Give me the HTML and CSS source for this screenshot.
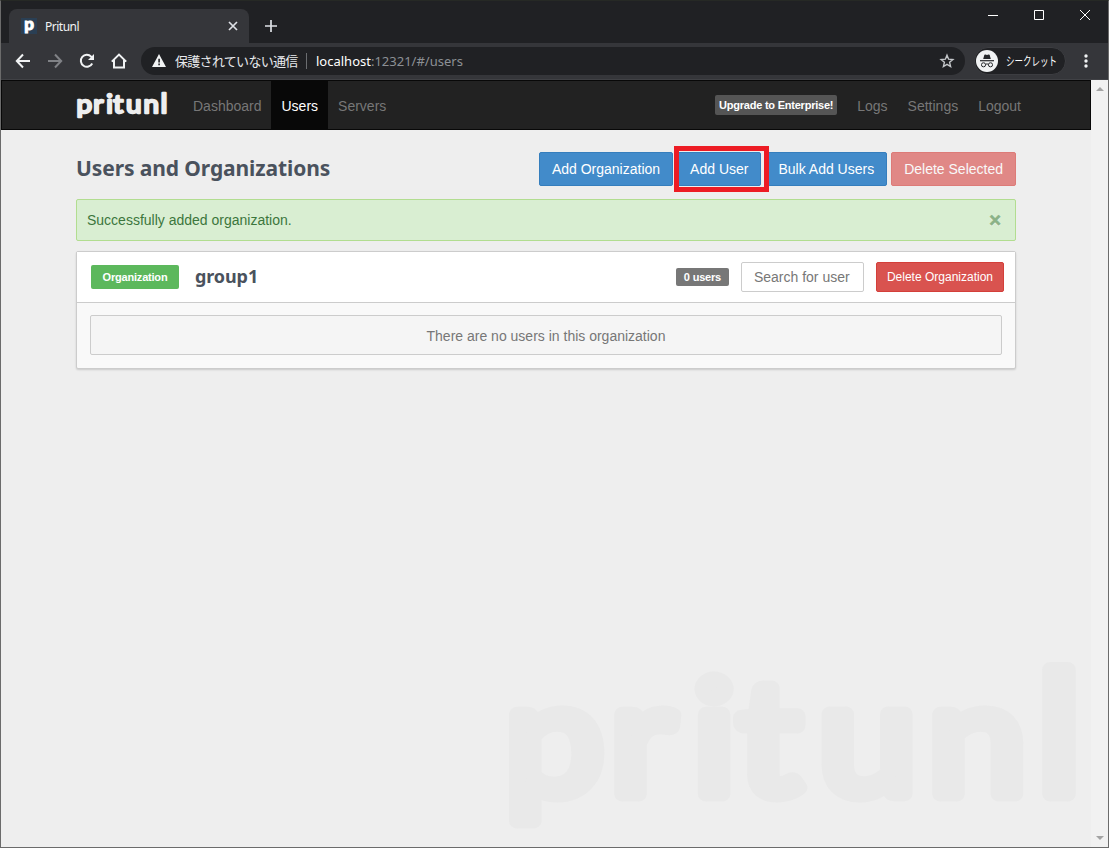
FILE: index.html
```html
<!DOCTYPE html>
<html lang="ja">
<head>
    <meta charset="utf-8">
    <title>Pritunl</title>
    <link rel="stylesheet" href="styles.css">
</head>
<body>
<div class="window">
    <!-- Tab strip -->
    <div class="tabstrip">
        <div class="tab">
            <span class="favicon">p</span>
            <span class="tab-title">Pritunl</span>
            <svg class="tab-close" width="10" height="10" viewBox="0 0 10 10"><path d="M1 1l8 8M9 1l-8 8"/></svg>
        </div>
        <svg class="new-tab" width="12" height="12" viewBox="0 0 12 12"><path d="M6 0v12M0 6h12"/></svg>
        <div class="window-controls">
            <svg width="12" height="12" viewBox="0 0 12 12"><path d="M1 6.5h10"/></svg>
            <svg width="12" height="12" viewBox="0 0 12 12"><path d="M1.5 1.5h9v9h-9z"/></svg>
            <svg width="12" height="12" viewBox="0 0 12 12"><path d="M1 1l10 10M11 1L1 11"/></svg>
        </div>
    </div>

    <!-- Address bar -->
    <div class="toolbar">
        <svg class="tool" width="16" height="16" viewBox="0 0 16 16"><path d="M15 8H2M8 1.5L1.8 8L8 14.5"/></svg>
        <svg class="tool disabled" width="16" height="16" viewBox="0 0 16 16"><path d="M1 8h13M8 1.5L14.2 8L8 14.5"/></svg>
        <svg class="tool" width="16" height="16" viewBox="0 0 16 16"><path d="M13.2 10.5a6 6 0 1 1-1-6.9L14 5.4"/><path class="solid" d="M15 1v6H9z"/></svg>
        <svg class="tool" width="16" height="16" viewBox="0 0 16 16"><path d="M.8 8.6L8 1.6l7.2 7M3 7v7.6h10V7"/></svg>
        <div class="omnibox">
            <svg class="warning" width="14" height="13" viewBox="0 0 14 13"><path d="M7 0l7 13H0z"/><path class="mark" d="M6.3 4.8h1.6v3.6H6.3zM6.3 9.6h1.6v1.6H6.3z"/></svg>
            <span class="insecure">保護されていない通信</span>
            <span class="divider"></span>
            <span class="url"><b>localhost</b>:12321/#/users</span>
            <svg class="star" width="16" height="16" viewBox="0 0 16 16"><path d="M8 2.2l1.6 4 4.3.3-3.3 2.8 1 4.2L8 11.3l-3.6 2.2 1-4.2-3.3-2.8 4.3-.3z"/></svg>
        </div>
        <div class="incognito">
            <svg width="22" height="22" viewBox="0 0 22 22">
                <circle cx="11" cy="11" r="11" fill="#f1f3f4"/>
                <path d="M7.2 9L8.3 5q.3-.8 1.1-.5l1.6.5 1.6-.5q.8-.3 1.1.5L14.8 9z" fill="#26282b"/>
                <path d="M4 10.7h14" stroke="#26282b" stroke-width="1.2"/>
                <g fill="none" stroke="#26282b"><rect x="5.5" y="12.8" width="4" height="4" rx="1.8"/><rect x="12.5" y="12.8" width="4" height="4" rx="1.8"/><path d="M9.5 14.3q1.5-.8 3 0"/></g>
            </svg>
            <span>シークレット</span>
        </div>
        <svg class="menu" width="4" height="14" viewBox="0 0 4 14"><circle cx="2" cy="2" r="1.7"/><circle cx="2" cy="7" r="1.7"/><circle cx="2" cy="12" r="1.7"/></svg>
    </div>

    <div class="viewport">
        <div class="page">
            <nav class="navbar">
                <svg class="logo" width="92" height="29" viewBox="507 663 582 182" preserveAspectRatio="none">
                    <text class="wordmark" transform="translate(505 0) scale(1.12 1)" y="795" x="-1 93 167 207 279 377 474">pritun<tspan class="tall">l</tspan></text>
                </svg>
                <a>Dashboard</a>
                <a class="active">Users</a>
                <a>Servers</a>
                <span class="upgrade">Upgrade to Enterprise!</span>
                <a>Logs</a>
                <a>Settings</a>
                <a>Logout</a>
            </nav>

            <main class="container">
                <div class="page-header">
                    <h3>Users and Organizations</h3>
                    <div class="actions">
                        <button class="btn btn-primary">Add Organization</button>
                        <span class="highlight"><button class="btn btn-primary">Add User</button></span>
                        <button class="btn btn-primary">Bulk Add Users</button>
                        <button class="btn btn-danger disabled">Delete Selected</button>
                    </div>
                </div>

                <div class="alert">Successfully added organization. <span class="close">×</span></div>

                <section class="org">
                    <div class="org-header">
                        <span class="org-label">Organization</span>
                        <h4>group1</h4>
                        <span class="user-count">0 users</span>
                        <input class="search" type="text" placeholder="Search for user">
                        <button class="btn btn-danger btn-sm">Delete Organization</button>
                    </div>
                    <div class="org-body">
                        <div class="no-users">There are no users in this organization</div>
                    </div>
                </section>
            </main>

            <svg class="watermark" width="582" height="186" viewBox="507 661 582 186">
                <text class="wordmark" transform="translate(505 0) scale(1.12 1)" y="795" x="-1 93 167 207 279 377 474">pritun<tspan class="tall">l</tspan></text>
            </svg>
        </div>
        <div class="scrollbar">
            <span class="arrow-up"></span>
            <span class="arrow-down"></span>
        </div>
    </div>
</div>
</body>
</html>
```

FILE: styles.css
```css
* {
    box-sizing: border-box;
}

body {
    margin: 0;
    font-family: "Liberation Sans", Arial, sans-serif;
    font-size: 14px;
    line-height: 20px;
    color: #333;
    background: #eee;
}

/* Browser window */
.window {
    display: flex;
    flex-direction: column;
    width: 1109px;
    height: 848px;
    overflow: hidden;
    border: 1px solid #6b6b6b;
    border-top-color: #262925;
}

.tabstrip {
    display: flex;
    height: 42px;
    padding-left: 8px;
    background: #202124;
    font-family: "Noto Sans", sans-serif;
}

.tab {
    display: flex;
    align-items: center;
    width: 240px;
    height: 34px;
    margin-top: 8px;
    padding: 0 11px 0 12px;
    border-radius: 8px 8px 0 0;
    background: #35363a;
}

.favicon {
    width: 16px;
    height: 16px;
    margin-right: 8px;
    background: #2a3f54;
    color: #fff;
    font: 900 17px/12px Lato, sans-serif;
    text-align: center;
    -webkit-text-stroke: 1px #fff;
}

.tab-title {
    flex: 1;
    padding-top: 2px;
    color: #f1f3f4;
    font-size: 12px;
    letter-spacing: -0.5px;
}

.tab-close,
.new-tab {
    fill: none;
    stroke: #dee1e6;
    stroke-width: 1.7;
}

.new-tab {
    margin: 19px 0 0 16px;
}

.window-controls {
    display: flex;
    gap: 34px;
    margin: 8px 17px 0 auto;
}

.window-controls svg {
    fill: none;
    stroke: #fff;
}

.toolbar {
    display: flex;
    align-items: center;
    height: 37px;
    padding: 0 20px 1px 14px;
    background: #35363a;
    border-bottom: 1px solid #404145;
}

.tool {
    margin-right: 16px;
    fill: none;
    stroke: #f1f3f4;
    stroke-width: 2;
}

.tool .solid {
    fill: #f1f3f4;
    stroke: none;
}

.tool.disabled {
    stroke: #808286;
}

.tool:nth-child(4) {
    margin-right: 14px;
}

.omnibox {
    display: flex;
    align-items: center;
    width: 824px;
    height: 28px;
    padding: 0 10px 0 11px;
    border-radius: 14px;
    background: #202124;
    color: #e8eaed;
}

.warning {
    fill: #f1f3f4;
}

.warning .mark {
    fill: #202124;
}

.insecure {
    width: 123px;
    margin-left: 9px;
    font: 13px/20px "Noto Sans CJK JP", sans-serif;
    letter-spacing: -0.7px;
    white-space: nowrap;
}

.divider {
    width: 1px;
    height: 16px;
    margin: 0 9px 0 8px;
    background: #6b6d70;
}

.url {
    font: 13px/20px "Noto Sans", sans-serif;
    color: #8c9095;
}

.url b {
    font-weight: 400;
    color: #fff;
}

.star {
    margin-left: auto;
    fill: none;
    stroke: #c4c7ca;
    stroke-width: 1.4;
}

.incognito {
    display: flex;
    align-items: center;
    width: 92px;
    height: 28px;
    margin-left: 9px;
    padding-left: 1px;
    border: 1px solid #3c3d41;
    border-radius: 14px;
    background: #202124;
}

.incognito svg {
    flex: none;
}

.incognito span {
    margin-left: 8px;
    color: #fff;
    font: 12px/20px "Noto Sans CJK JP", sans-serif;
    white-space: nowrap;
    width: 51px;
    transform: scaleX(0.71);
    transform-origin: left;
}

.menu {
    flex: none;
    margin-left: auto;
    fill: #f1f3f4;
}

/* Page */
.viewport {
    display: flex;
    flex: 1;
    min-height: 0;
}

.page {
    position: relative;
    width: 1090px;
    background: #eee;
}

.scrollbar {
    display: flex;
    flex: 1;
    flex-direction: column;
    align-items: center;
    justify-content: space-between;
    padding: 7px 0;
    background: #f1f1f1;
}

.arrow-up,
.arrow-down {
    border: 4px solid transparent;
    border-top-width: 0;
    border-bottom: 4px solid #a3a3a3;
}

.arrow-down {
    transform: rotate(180deg);
}

.wordmark {
    font-family: Lato, sans-serif;
    font-size: 157px;
    font-weight: 400;
    fill: currentColor;
    stroke: currentColor;
    stroke-width: 15px;
    stroke-linejoin: round;
}

.wordmark .tall {
    font-size: 168px;
}

.navbar {
    display: flex;
    align-items: center;
    height: 50px;
    padding: 0 59px 0 75px;
    background: #222;
    border: 1px solid #080808;
}

.logo {
    margin: 2px 14px 0 0;
    overflow: visible;
    color: #eee;
}

.navbar a {
    padding: 15px 10px 13px;
    color: #777;
}

.navbar a.active {
    margin-left: -1px;
    padding-left: 11px;
    background: #080808;
    color: #fff;
}

.upgrade {
    margin: 0 10px 0 auto;
    padding: 0 4px;
    border-radius: 2px;
    background: #555;
    color: #fff;
    font-size: 11px;
    font-weight: bold;
    letter-spacing: -0.23px;
}

.container {
    width: 940px;
    margin: 22px 0 0 75px;
}

.page-header {
    display: flex;
    align-items: center;
    justify-content: space-between;
    height: 34px;
    margin-bottom: 13px;
}

h3,
h4 {
    margin: 0;
    padding-bottom: 2px;
    color: #4a525d;
    font-family: "Noto Sans", sans-serif;
    font-weight: 700;
}

h3 {
    font-size: 21px;
    letter-spacing: -0.1px;
}

h4 {
    margin-left: 16px;
    font-size: 18px;
    letter-spacing: -0.1px;
}

.actions {
    display: flex;
    gap: 4px;
}

.btn {
    height: 34px;
    padding: 0 12px;
    border: 1px solid;
    border-radius: 2px;
    color: #fff;
    font: 14px/20px "Liberation Sans", Arial, sans-serif;
    white-space: nowrap;
}

.btn-primary {
    background: #428bca;
    border-color: #357ebd;
}

.btn-danger {
    background: #d9534f;
    border-color: #d43f3a;
}

.btn.disabled {
    opacity: 0.65;
}

.btn-sm {
    height: 30px;
    padding: 0 10px;
    font-size: 12px;
}

.highlight {
    position: relative;
}

.highlight::after {
    content: "";
    position: absolute;
    inset: -6px -8px -6px -3px;
    border: 5px solid #ed1c24;
}

.alert {
    display: flex;
    align-items: center;
    justify-content: space-between;
    height: 42px;
    margin-bottom: 10px;
    padding: 0 14px 0 10px;
    border: 1px solid #b2dd90;
    border-radius: 2px;
    background: #d9eed2;
    color: #3c763d;
}

.close {
    color: #8bb287;
    font-size: 20px;
    font-weight: bold;
    text-shadow: 0 1px 0 #fff;
    -webkit-text-stroke: 0.6px #8bb287;
}

.org {
    height: 118px;
    border: 1px solid #ccc;
    border-radius: 2px;
    background: #f9f9f9;
    box-shadow: 0 1px 2px rgba(0, 0, 0, 0.15);
}

.org-header {
    display: flex;
    align-items: center;
    height: 51px;
    padding: 0 11px 0 14px;
    background: #fff;
    border-bottom: 1px solid #ccc;
}

.org-label {
    width: 88px;
    border-radius: 2px;
    background: #5cb85c;
    color: #fff;
    font-size: 11px;
    font-weight: bold;
    letter-spacing: -0.2px;
    line-height: 24px;
    text-align: center;
}

.user-count {
    width: 53px;
    margin-left: auto;
    border-radius: 2px;
    background: #777;
    color: #fff;
    font-size: 11px;
    font-weight: bold;
    letter-spacing: -0.2px;
    line-height: 18px;
    text-align: center;
}

.search {
    width: 123px;
    height: 30px;
    margin: 0 12px;
    padding: 0 12px;
    border: 1px solid #ccc;
    border-radius: 2px;
    font: 14px/20px "Liberation Sans", Arial, sans-serif;
}

.search::placeholder {
    color: #777;
}

.org-body {
    padding: 12px 13px;
}

.no-users {
    height: 40px;
    border: 1px solid #ccc;
    border-radius: 2px;
    background: #f5f5f5;
    color: #777;
    line-height: 40px;
    text-align: center;
}

/* Large logo in the page corner */
.watermark {
    position: absolute;
    right: 1px;
    bottom: 1px;
    overflow: visible;
    color: #e9e9e9;
}
```
